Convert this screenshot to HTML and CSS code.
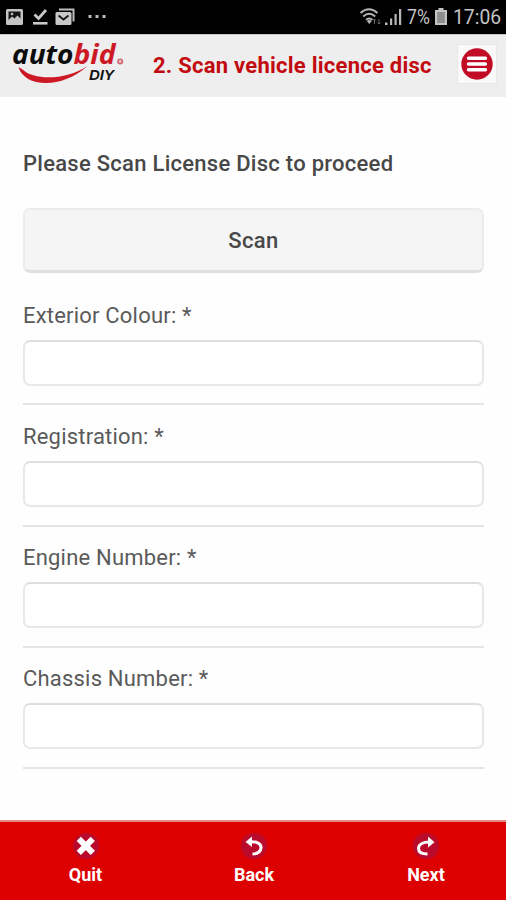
FILE: index.html
```html
<!DOCTYPE html>
<html lang="en">
<head>
<meta charset="utf-8">
<title>autobid DIY</title>
<link rel="stylesheet" href="styles.css">
</head>
<body>
<div class="screen">
  <div class="status">
    <svg class="status-left" width="120" height="34" viewBox="0 0 120 34">
      <rect x="6" y="9" width="17" height="16" rx="1.500" fill="#c4c4c4"/>
      <path d="M8.500 11.500h12v7l-3-3-3 3-2.500-2-3.500 3.500z" fill="#161616"/>
      <circle cx="12" cy="14" r="1.300" fill="#c4c4c4"/>
      <path d="M34.500 14.500l4 4 7.500-8.500" fill="none" stroke="#c8c8c8" stroke-width="2.800"/>
      <rect x="33" y="22" width="14.500" height="2.600" fill="#c8c8c8"/>
      <path d="M59 9.500h14.500v12" fill="none" stroke="#bdbdbd" stroke-width="2"/>
      <rect x="55.500" y="12" width="16" height="13" rx="1.500" fill="#c8c8c8"/>
      <path d="M58.500 15.500l5 4 5-4" fill="none" stroke="#161616" stroke-width="1.800"/>
      <g fill="#bcbcbc"><rect x="88.500" y="15" width="3" height="3"/><rect x="95.500" y="15" width="3" height="3"/><rect x="102.500" y="15" width="3" height="3"/></g>
    </svg>
    <div class="status-right">
      <svg width="46" height="34" viewBox="0 0 46 34">
        <g fill="none" stroke="#b5b5b5" stroke-width="1.900">
          <path d="M1.500 13q8.500-7.500 17 0"/><path d="M4.200 16.500q6-5.300 12 0"/><path d="M7 19.800q3.300-2.800 6.500 0"/>
        </g>
        <path d="M7.800 21q2.500-2 5 0l-2.500 3z" fill="#b5b5b5"/>
        <path d="M15.500 24v-5m-1.500 1.500 1.500-1.500 1.500 1.500M20 19v5m-1.500-1.500L20 24l1.500-1.500" fill="none" stroke="#686868" stroke-width="1"/>
        <g fill="#b8b8b8"><rect x="26" y="22.500" width="2.500" height="2.500"/><rect x="31" y="18.500" width="2.200" height="6.500"/><rect x="35.500" y="14" width="2.200" height="11"/><rect x="40" y="9" width="2.200" height="16"/></g>
      </svg>
      <span class="percent">7%</span>
      <svg class="battery" width="12" height="34" viewBox="0 0 12 34"><path d="M3.500 8h5v2H12v15H0V10h3.500z" fill="#c4c4c4"/><path d="M2.200 12h7.600v11H2.200z" fill="#8e8e8e"/></svg>
      <span class="clock">17:06</span>
    </div>
  </div>

  <header class="header">
    <svg class="logo" width="126" height="62" viewBox="0 0 126 62">
      <g class="logo-name"><text x="12" y="29" textLength="61.500" lengthAdjust="spacingAndGlyphs">auto</text><text class="red" x="73.500" y="29" textLength="42" lengthAdjust="spacingAndGlyphs">bid</text></g>
      <path d="M18.500 32C24 52.500 62 54.500 87.500 31C66 45.500 34 45.500 22.500 34.500z" fill="#cd1826"/>
      <circle cx="120.200" cy="26.500" r="3" fill="#d3606d"/>
      <text class="tiny" x="120.200" y="28" text-anchor="middle">R</text>
      <text class="diy" x="89" y="45" textLength="25" lengthAdjust="spacingAndGlyphs">DIY</text>
    </svg>
    <h1>2. Scan vehicle licence disc</h1>
    <button class="menu" aria-label="Menu">
      <svg width="32" height="32" viewBox="0 0 32 32"><circle cx="16" cy="16" r="15.700" fill="#c20b24"/><path d="M7.500 10.200h17M7.500 16h17M7.500 21.800h17" stroke="#fff" stroke-width="3.400" stroke-linecap="round"/></svg>
    </button>
  </header>

  <main>
    <h2>Please Scan License Disc to proceed</h2>
    <button class="scan">Scan</button>
    <form>
      <div class="field"><label for="colour">Exterior Colour: *</label><input id="colour"></div>
      <div class="field"><label for="reg">Registration: *</label><input id="reg"></div>
      <div class="field"><label for="engine">Engine Number: *</label><input id="engine"></div>
      <div class="field"><label for="chassis">Chassis Number: *</label><input id="chassis"></div>
    </form>
  </main>

  <nav class="footer">
    <a class="action">
      <svg width="28" height="28" viewBox="0 0 28 28"><circle cx="14" cy="14" r="13" fill="#b90a2c"/><path d="M6.800 6.800l14 14M20.800 6.800l-14 14" stroke="#fff" stroke-width="6"/></svg>
      <span>Quit</span>
    </a>
    <a class="action">
      <svg width="28" height="28" viewBox="0 0 28 28"><circle cx="14" cy="14" r="13" fill="#b90a2c"/><path d="M10.500 9.700C17 9.300 21.500 12 21 16c-.4 3.500-3.500 5.800-8.500 6" fill="none" stroke="#fff" stroke-width="3"/><path d="M5.500 10l6.500-5.500v10.500z" fill="#fff"/></svg>
      <span>Back</span>
    </a>
    <a class="action">
      <svg width="28" height="28" viewBox="0 0 28 28"><circle cx="14" cy="14" r="13" fill="#b90a2c"/><path d="M17.500 10C11 10 6.500 12.500 6.500 16.500c0 3.500 3 5.500 9 5.500" fill="none" stroke="#fff" stroke-width="3"/><path d="M22.500 10.200L16 4.500v11z" fill="#fff"/></svg>
      <span>Next</span>
    </a>
  </nav>
</div>
</body>
</html>
```
FILE: styles.css
```css
* { box-sizing: border-box; }
body { margin: 0; font-family: Roboto, "Liberation Sans", sans-serif; color: #484848; background: #fefefe; }
button { font-family: inherit; padding: 0; }
.screen { width: 506px; height: 900px; display: flex; flex-direction: column; overflow: hidden; }
.status { height: 34px; flex: none; background: #000; display: flex; justify-content: space-between; }
.status-right { display: flex; align-items: center; padding-right: 5px; color: #c4c4c4; font-size: 21px; line-height: 34px; white-space: nowrap; }
.percent { width: 25px; transform: scaleX(.84); transform-origin: left; margin-left: 2px; }
.battery { margin: 0 6px 0 3px; }
.clock { width: 48px; transform: scaleX(.92); transform-origin: left; }
.header { height: 63px; flex: none; background: #eee; border-top: 1px solid #c6c6c6; display: flex; align-items: center; }
.logo { flex: none; display: block; }
.logo-name { font: italic 700 26.5px "Open Sans", sans-serif; fill: #0c0c0c; }
.logo-name .red { fill: #cd1826; }
.tiny { font: 700 4px Roboto, sans-serif; fill: #eee; }
.diy { font: italic 700 15px "Liberation Sans", sans-serif; fill: #141414; }
h1 { flex: 1; margin: 0; padding-left: 27px; font-size: 22px; line-height: 28px; font-weight: 700; color: #c20b10; white-space: nowrap; letter-spacing: .25px; }
.menu { width: 40px; height: 40px; margin: 0 9px 4px 0; border: 1px solid #e7e7e7; background: #f9f9f9; display: flex; align-items: center; justify-content: center; }
main { flex: 1; padding: 52px 22px 0 23px; }
h2 { margin: 0; font-size: 22px; line-height: 30px; font-weight: 500; white-space: nowrap; letter-spacing: .27px; }
.scan { display: block; width: 100%; height: 65px; margin: 29px 0 11px; border: 2px solid #ececec; border-bottom: 3px solid #e0e0e0; border-radius: 7px; background: #f5f5f5; color: #484848; font-size: 22px; font-weight: 500; letter-spacing: .4px; }
.field { height: 121.3px; padding-top: 16.500px; border-bottom: 2px solid #e4e4e4; }
label { display: block; height: 39px; line-height: 30px; font-size: 22px; color: #5a5a5a; letter-spacing: .2px; white-space: nowrap; }
input { display: block; width: 100%; height: 46px; border: 2px solid #e8e8e8; border-top-color: #dedede; border-radius: 7px; background: #fff; }
.footer { height: 80px; flex: none; background: #dc0000; border-top: 2px solid #e98882; display: grid; grid-template-columns: 171px 166px 1fr; padding-top: 10px; }
.action { display: flex; flex-direction: column; align-items: center; color: #fff; font-size: 18px; line-height: 24px; font-weight: 700; }
.action span { margin-top: 3px; }
.action:last-child { padding-left: 9px; }
```
